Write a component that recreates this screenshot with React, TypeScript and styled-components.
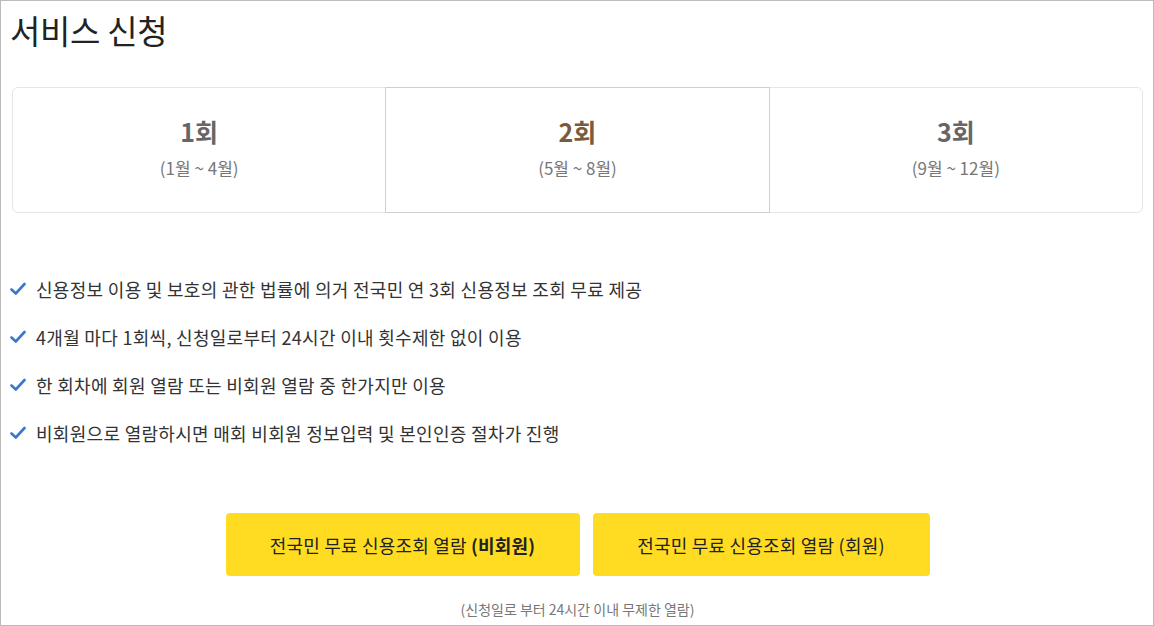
import React from 'react';
import styled, { createGlobalStyle } from 'styled-components';

const GlobalStyle = createGlobalStyle`
  html, body {
    margin: 0;
    padding: 0;
    background: #ffffff;
  }
  body {
    font-family: "Noto Sans CJK KR", "Noto Sans", sans-serif;
  }
  * {
    box-sizing: border-box;
  }
`;

const Page = styled.div`
  width: 1154px;
  height: 626px;
  border: 1px solid #bcbcbc;
  padding: 0 10px 0 11px;
  overflow: hidden;
`;

const Title = styled.h1`
  margin: 0 0 0 -2px;
  padding-top: 6px;
  font-size: 33px;
  font-weight: 400;
  line-height: 46px;
  color: #222222;
  letter-spacing: -0.3px;
`;

const Tabs = styled.div`
  margin-top: 34px;
  display: flex;
  height: 126px;
  border: 1px solid #e6e6e6;
  border-radius: 6px;
`;

const Tab = styled.div<{ active?: boolean; grow: number }>`
  flex: ${({ grow }) => grow} 1 0;
  display: flex;
  flex-direction: column;
  align-items: center;
  justify-content: center;
  margin: -1px 0;
  padding-bottom: 6px;
  border: 1px solid ${({ active }) => (active ? '#cfcfcf' : 'transparent')};
  cursor: pointer;
`;

const TabName = styled.div<{ active?: boolean }>`
  font-size: 25px;
  font-weight: 700;
  line-height: 34px;
  color: ${({ active }) => (active ? '#7b5a3c' : '#666666')};
`;

const TabRange = styled.div`
  margin-top: 8px;
  font-size: 17px;
  line-height: 24px;
  color: #777777;
`;

const Notes = styled.ul`
  list-style: none;
  margin: 62px 0 0 -2px;
  padding: 0;
  display: flex;
  flex-direction: column;
  gap: 20px;
`;

const Note = styled.li`
  display: flex;
  align-items: center;
  gap: 10px;
  font-size: 18px;
  line-height: 28px;
  letter-spacing: 0.3px;
  color: #333333;
`;

const Check = styled.svg`
  width: 16px;
  height: 14px;
  flex: none;
`;

const Buttons = styled.div`
  margin-top: 66px;
  display: flex;
  justify-content: center;
  gap: 13px;
`;

const ApplyButton = styled.button<{ w: number }>`
  width: ${({ w }) => w}px;
  height: 63px;
  border: none;
  border-radius: 4px;
  background: #ffdc22;
  font-family: inherit;
  font-size: 18px;
  letter-spacing: 0.2px;
  color: #222222;
  cursor: pointer;

  b {
    font-weight: 700;
  }
`;

const Caption = styled.p`
  margin: 23px 0 0;
  text-align: center;
  font-size: 14px;
  line-height: 20px;
  color: #777777;
`;

const rounds = [
  { name: '1회', range: '(1월 ~ 4월)', grow: 373 },
  { name: '2회', range: '(5월 ~ 8월)', grow: 385, active: true },
  { name: '3회', range: '(9월 ~ 12월)', grow: 373 },
];

const notes = [
  '신용정보 이용 및 보호의 관한 법률에 의거 전국민 연 3회 신용정보 조회 무료 제공',
  '4개월 마다 1회씩, 신청일로부터 24시간 이내 횟수제한 없이 이용',
  '한 회차에 회원 열람 또는 비회원 열람 중 한가지만 이용',
  '비회원으로 열람하시면 매회 비회원 정보입력 및 본인인증 절차가 진행',
];

const CheckIcon = () => (
  <Check viewBox="0 0 16 14">
    <path d="M1.5 7.5 L5.8 11.5 L14.5 2" fill="none" stroke="#3b78cc" strokeWidth="2.6" strokeLinecap="round" strokeLinejoin="round" />
  </Check>
);

export default function App() {
  return (
    <>
      <GlobalStyle />
      <Page>
        <Title>서비스 신청</Title>
        <Tabs>
          {rounds.map((r) => (
            <Tab key={r.name} active={r.active} grow={r.grow}>
              <TabName active={r.active}>{r.name}</TabName>
              <TabRange>{r.range}</TabRange>
            </Tab>
          ))}
        </Tabs>
        <Notes>
          {notes.map((n) => (
            <Note key={n}>
              <CheckIcon />
              {n}
            </Note>
          ))}
        </Notes>
        <Buttons>
          <ApplyButton w={354}>
            전국민 무료 신용조회 열람 <b>(비회원)</b>
          </ApplyButton>
          <ApplyButton w={337}>전국민 무료 신용조회 열람 (회원)</ApplyButton>
        </Buttons>
        <Caption>(신청일로 부터 24시간 이내 무제한 열람)</Caption>
      </Page>
    </>
  );
}
